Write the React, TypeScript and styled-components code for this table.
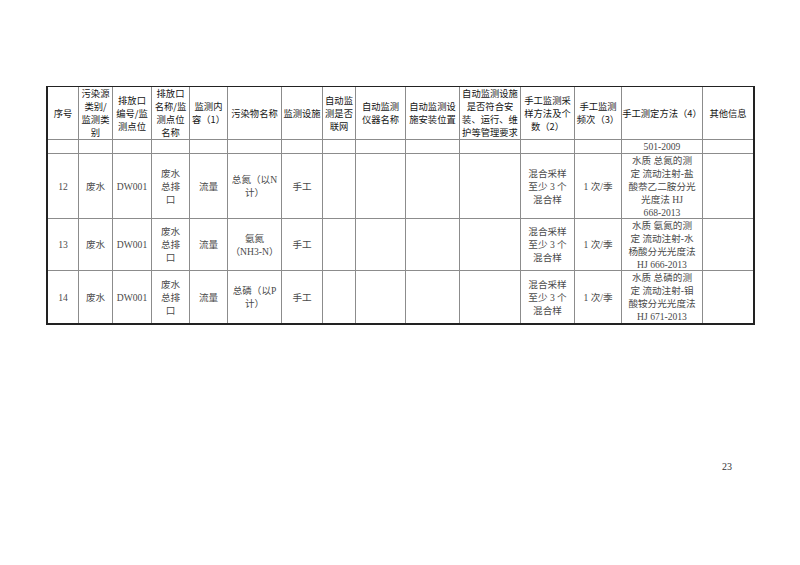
import React from "react";
import styled, { createGlobalStyle } from "styled-components";

const Global = createGlobalStyle`
  html, body { margin: 0; padding: 0; background: #fff; }
  #root { width: 800px; height: 565px; }
`;

const Page = styled.div`
  width: 800px;
  height: 565px;
  box-sizing: border-box;
  padding: 86px 0 0 46px;
  display: flex;
  flex-direction: column;
  background: #fff;
`;

const Grid = styled.div`
  display: grid;
  grid-template-columns: 30px 33px 38px 37px 37px 53px 40px 32px 49px 53px 60px 53px 46px 80px 50px;
  grid-template-rows: 52px 13px 64px 51px 52px;
  gap: 1px;
  background: #8c8c8c;
  border-top: 1px solid #222;
  border-left: 2px solid #222;
  border-right: 2px solid #222;
  border-bottom: 2px solid #222;
  width: max-content;
`;

const Cell = styled.div<{ $head?: boolean }>`
  background: #fff;
  display: flex;
  align-items: center;
  justify-content: center;
  text-align: center;
  white-space: nowrap;
  line-height: 13px;
  overflow: visible;
  font-family: ${(p) =>
    p.$head
      ? `"Noto Sans CJK SC", sans-serif`
      : `"Liberation Serif", "Noto Sans CJK SC", serif`};
  font-size: ${(p) => (p.$head ? "9.3px" : "9.6px")};
  color: ${(p) => (p.$head ? "#151515" : "#4a4a4a")};
`;

const PageNumber = styled.div`
  align-self: flex-end;
  margin-top: 136px;
  margin-right: 68px;
  font-family: "Liberation Serif", serif;
  font-size: 10px;
  line-height: 12px;
  color: #333;
`;

const headers: string[][] = [
  ["序号"],
  ["污染源", "类别/", "监测类", "别"],
  ["排放口", "编号/监", "测点位"],
  ["排放口", "名称/监", "测点位", "名称"],
  ["监测内", "容（1）"],
  ["污染物名称"],
  ["监测设施"],
  ["自动监", "测是否", "联网"],
  ["自动监测", "仪器名称"],
  ["自动监测设", "施安装位置"],
  ["自动监测设施", "是否符合安", "装、运行、维", "护等管理要求"],
  ["手工监测采", "样方法及个", "数（2）"],
  ["手工监测", "频次（3）"],
  ["手工测定方法（4）"],
  ["其他信息"],
];

const sampling = ["混合采样", "至少 3 个", "混合样"];
const outlet = ["废水", "总排", "口"];

const rows: string[][][] = [
  [[], [], [], [], [], [], [], [], [], [], [], [], [], ["501-2009"], []],
  [
    ["12"], ["废水"], ["DW001"], outlet, ["流量"], ["总氮（以N", "计）"], ["手工"],
    [], [], [], [], sampling, ["1 次/季"],
    ["水质 总氮的测", "定 流动注射-盐", "酸萘乙二胺分光", "光度法 HJ", "668-2013"], [],
  ],
  [
    ["13"], ["废水"], ["DW001"], outlet, ["流量"], ["氨氮", "（NH3-N）"], ["手工"],
    [], [], [], [], sampling, ["1 次/季"],
    ["水质 氨氮的测", "定 流动注射-水", "杨酸分光光度法", "HJ 666-2013"], [],
  ],
  [
    ["14"], ["废水"], ["DW001"], outlet, ["流量"], ["总磷（以P", "计）"], ["手工"],
    [], [], [], [], sampling, ["1 次/季"],
    ["水质 总磷的测", "定 流动注射-钼", "酸铵分光光度法", "HJ 671-2013"], [],
  ],
];

const Lines: React.FC<{ lines: string[] }> = ({ lines }) => (
  <span>
    {lines.map((l, i) => (
      <React.Fragment key={i}>
        {i > 0 && <br />}
        {l}
      </React.Fragment>
    ))}
  </span>
);

export default function App() {
  return (
    <>
      <Global />
      <Page>
        <Grid>
          {headers.map((h, i) => (
            <Cell $head key={`h${i}`}>
              <Lines lines={h} />
            </Cell>
          ))}
          {rows.map((r, ri) =>
            r.map((c, ci) => (
              <Cell key={`r${ri}c${ci}`}>
                <Lines lines={c} />
              </Cell>
            ))
          )}
        </Grid>
        <PageNumber>23</PageNumber>
      </Page>
    </>
  );
}
